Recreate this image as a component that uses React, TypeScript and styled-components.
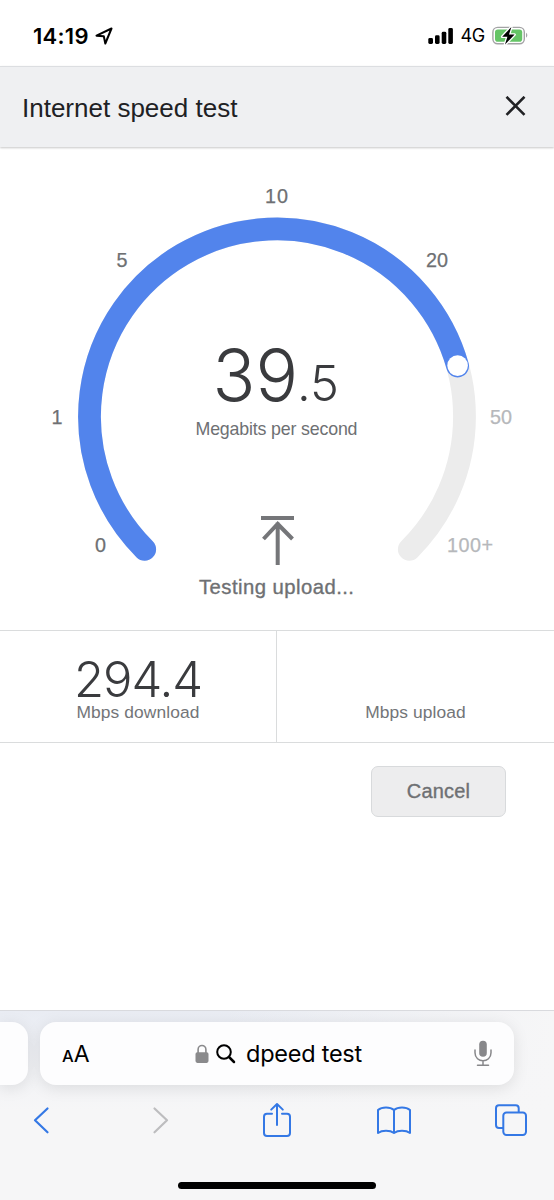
import React from "react";
import styled, { createGlobalStyle } from "styled-components";

const GlobalStyle = createGlobalStyle`
  *, *::before, *::after { box-sizing: border-box; }
  body { margin: 0; background: #fff; }
`;

const helvetica = `"Liberation Sans", Arial, sans-serif`;
const system = `Inter, "Liberation Sans", sans-serif`;

const Screen = styled.div`
  width: 554px;
  height: 1200px;
  display: flex;
  flex-direction: column;
  overflow: hidden;
  background: #fff;
  font-family: ${helvetica};
`;

const StatusBar = styled.div`
  height: 66px;
  flex: none;
  display: flex;
  align-items: center;
  justify-content: space-between;
  padding: 5px 26px 0 33px;
  color: #000;
  font-family: ${system};
`;

const StatusGroup = styled.div<{ $gap: number }>`
  display: flex;
  align-items: center;
  gap: ${(p) => p.$gap}px;
`;

const Clock = styled.span`
  font-size: 22px;
  font-weight: 600;
  line-height: 26px;
  letter-spacing: 0.3px;
`;

const Network = styled.span`
  font-size: 18px;
  line-height: 24px;
  letter-spacing: -0.3px;
`;

const Header = styled.header`
  height: 81px;
  flex: none;
  display: flex;
  align-items: center;
  justify-content: space-between;
  padding: 0 28px 0 22px;
  background: #eff0f2;
  border-top: 1px solid #dcdee1;
  box-shadow: 0 1px 2px rgba(0, 0, 0, 0.22);
`;

const Title = styled.h1`
  margin: 1px 0 0;
  font-size: 26px;
  font-weight: 400;
  line-height: 30px;
  color: #202124;
`;

const IconButton = styled.button`
  display: flex;
  padding: 0;
  border: 0;
  background: none;
`;

const GaugePanel = styled.section`
  height: 483px;
  flex: none;
  padding-top: 1px;

  svg { display: block; }
`;

const GaugeText = styled.text<{ $size: number; $color?: string; $bold?: number }>`
  font-family: ${helvetica};
  font-size: ${(p) => p.$size}px;
  fill: ${(p) => p.$color ?? "#6e7073"};
  stroke: ${(p) => p.$color ?? "#6e7073"};
  stroke-width: ${(p) => p.$bold ?? 0}px;
`;

const GaugeValue = styled.text<{ $size: number }>`
  font-family: ${system};
  font-size: ${(p) => p.$size}px;
  font-weight: 300;
  fill: #3a3b3e;
`;

const Stats = styled.section`
  height: 113px;
  flex: none;
  display: grid;
  grid-template-columns: 276px 278px;
  border-top: 1px solid #dadcdd;
  border-bottom: 1px solid #dadcdd;
`;

const Stat = styled.div`
  display: flex;
  flex-direction: column;
  align-items: center;
  padding-top: 24px;

  & + & { border-left: 1px solid #dadcdd; }
`;

const StatValue = styled.div`
  height: 47px;
  font-family: ${system};
  font-size: 49px;
  font-weight: 300;
  line-height: 49px;
  letter-spacing: -1.1px;
  color: #3a3b3e;
`;

const StatLabel = styled.div`
  font-size: 17.4px;
  line-height: 20px;
  letter-spacing: 0.1px;
  color: #737578;
`;

const Actions = styled.div`
  flex: 1;
  display: flex;
  align-items: flex-start;
  justify-content: flex-end;
  padding: 23px 48px 0 0;
`;

const CancelButton = styled.button`
  width: 135px;
  height: 51px;
  padding: 0;
  border: 1px solid #d8dadc;
  border-radius: 7px;
  background: #ededee;
  color: #6e7073;
  font-family: ${helvetica};
  font-size: 20px;
  letter-spacing: 0.2px;
  -webkit-text-stroke: 0.35px #6e7073;
`;

const Browser = styled.footer`
  height: 190px;
  flex: none;
  display: flex;
  flex-direction: column;
  border-top: 1px solid #d9dade;
  background: linear-gradient(90deg, rgba(246, 246, 247, 0) 40%, #f6f6f7 100%),
    linear-gradient(180deg, #e9ecf3 0, #f2f3f6 60px, #f6f6f7 100px);
`;

const AddressRow = styled.div`
  display: flex;
  gap: 12px;
  padding-top: 11px;
`;

const PreviousTab = styled.div`
  width: 28px;
  height: 63px;
  border-radius: 0 16px 16px 0;
  background: #fdfdfe;
  box-shadow: 0 3px 16px rgba(0, 0, 0, 0.1);
`;

const AddressBar = styled.div`
  width: 474px;
  height: 63px;
  display: grid;
  grid-template-columns: 100px 1fr 100px;
  align-items: center;
  padding: 0 22px;
  border-radius: 16px;
  background: #fdfdfe;
  box-shadow: 0 3px 16px rgba(0, 0, 0, 0.1);
  font-family: ${system};
  color: #000;
`;

const TextSize = styled.div`
  display: flex;
  align-items: baseline;
  margin-top: 3px;
  font-size: 23px;
  line-height: 30px;

  small {
    font-size: 16.5px;
    font-weight: 500;
  }
`;

const Query = styled.div`
  display: flex;
  align-items: center;
  margin-left: 33px;
  white-space: nowrap;
`;

const QueryText = styled.span`
  margin: 1px 0 0 10px;
  font-size: 23.5px;
  line-height: 30px;
  letter-spacing: -0.25px;
`;

const MicSlot = styled.div`
  display: flex;
  justify-content: flex-end;
`;

const Toolbar = styled.nav`
  display: flex;
  align-items: center;
  justify-content: space-between;
  height: 70px;
  padding: 0 13px 0 11px;
`;

const ToolButton = styled.button<{ $nudge?: number }>`
  width: 60px;
  height: 44px;
  display: flex;
  align-items: center;
  justify-content: center;
  padding: 0 0 0 ${(p) => p.$nudge ?? 0}px;
  border: 0;
  background: none;
`;

const HomeIndicator = styled.div`
  width: 198px;
  height: 7px;
  margin: 27px 0 0 178px;
  border-radius: 4px;
  background: #000;
`;

const blue = "#3478e5";

const ticks = [
  { label: "0", x: 95, y: 404, w: 11 },
  { label: "1", x: 51.5, y: 276, w: 11 },
  { label: "5", x: 116.5, y: 119, w: 11 },
  { label: "10", x: 265, y: 55, w: 23 },
  { label: "20", x: 426, y: 119, w: 22 },
  { label: "50", x: 490, y: 276, w: 22, dim: true },
  { label: "100+", x: 447, y: 404, w: 46, dim: true },
];

function Gauge() {
  return (
    <svg width="554" height="482" viewBox="0 0 554 482">
      <path d="M144.7 401.3A187.5 187.5 0 1 1 409.3 401.3" fill="none" stroke="#ececec" strokeWidth="22.8" strokeLinecap="round" />
      <path d="M144.7 401.3A187.5 187.5 0 1 1 457.6 218" fill="none" stroke="#5284ec" strokeWidth="22.8" strokeLinecap="round" />
      <circle cx="457.6" cy="217.6" r="10.3" fill="#fff" />
      {ticks.map((t) => (
        <GaugeText key={t.label} x={t.x} y={t.y} textLength={t.w} $size={19.8} $bold={0.25} $color={t.dim ? "#b6b8bb" : "#6e7073"}>
          {t.label}
        </GaugeText>
      ))}
      <GaugeValue x="212.5" y="253" $size={72} textLength="85.5" lengthAdjust="spacingAndGlyphs">39</GaugeValue>
      <GaugeValue x="297" y="253" $size={49} textLength="42" lengthAdjust="spacingAndGlyphs">.5</GaugeValue>
      <GaugeText x="195.5" y="287" textLength="162" $size={17.8}>Megabits per second</GaugeText>
      <path d="M261 370H294M277.7 417V374.5M263.5 391L277.7 376L292.5 391" fill="none" stroke="#757679" strokeWidth="4" />
      <GaugeText x="199" y="446" textLength="155" $size={20.3} $bold={0.35}>Testing upload...</GaugeText>
    </svg>
  );
}

function LocationIcon() {
  return (
    <svg width="18" height="18" viewBox="0 0 18 18">
      <path d="M1.5 8.7L16.5 1.5L10.3 16.5L8.8 9.3Z" fill="none" stroke="#000" strokeWidth="2" strokeLinejoin="round" />
    </svg>
  );
}

function SignalIcon() {
  return (
    <svg width="26" height="18" viewBox="0 0 26 18">
      <rect x="0.3" y="11" width="4.7" height="6" rx="1.4" />
      <rect x="7" y="8.3" width="4.6" height="8.7" rx="1.4" />
      <rect x="13.7" y="4.8" width="4.6" height="12.2" rx="1.4" />
      <rect x="20.3" y="1" width="4.6" height="16" rx="1.4" />
    </svg>
  );
}

function BatteryIcon() {
  return (
    <svg width="36" height="20" viewBox="0 0 36 20">
      <rect x="0.9" y="1.4" width="31.4" height="16.4" rx="4.8" fill="#fff" stroke="#a3a3a5" strokeWidth="1.4" />
      <rect x="3" y="3.5" width="27.2" height="12.2" rx="2.8" fill="#65c466" />
      <path d="M34 6.8C35.8 7.9 35.8 10.5 34 11.7Z" fill="#a3a3a5" />
      <path d="M19.4 0.9L10.2 10.7H15.4L13 18.5L22.6 8.6H17Z" fill="#000" stroke="#fff" strokeWidth="2.6" strokeLinejoin="round" paintOrder="stroke" />
    </svg>
  );
}

export default function App() {
  return (
    <>
      <GlobalStyle />
      <Screen>
        <StatusBar>
          <StatusGroup $gap={6}>
            <Clock>14:19</Clock>
            <LocationIcon />
          </StatusGroup>
          <StatusGroup $gap={7}>
            <SignalIcon />
            <Network>4G</Network>
            <BatteryIcon />
          </StatusGroup>
        </StatusBar>

        <Header>
          <Title>Internet speed test</Title>
          <IconButton aria-label="Close">
            <svg width="22" height="22" viewBox="0 0 22 22">
              <path d="M2.5 0.8L20.5 18.8M20.5 0.8L2.5 18.8" stroke="#202124" strokeWidth="2.6" />
            </svg>
          </IconButton>
        </Header>

        <GaugePanel>
          <Gauge />
        </GaugePanel>

        <Stats>
          <Stat>
            <StatValue>294.4</StatValue>
            <StatLabel>Mbps download</StatLabel>
          </Stat>
          <Stat>
            <StatValue />
            <StatLabel>Mbps upload</StatLabel>
          </Stat>
        </Stats>

        <Actions>
          <CancelButton>Cancel</CancelButton>
        </Actions>

        <Browser>
          <AddressRow>
            <PreviousTab />
            <AddressBar>
              <TextSize>
                <small>A</small>A
              </TextSize>
              <Query>
                <svg width="14" height="20" viewBox="0 0 14 20">
                  <path d="M3.1 9V5.6C3.1 0.1 10.9 0.1 10.9 5.6V9" fill="none" stroke="#8a8a8c" strokeWidth="1.6" />
                  <rect x="0.5" y="8.3" width="13" height="10.6" rx="1.8" fill="#8a8a8c" />
                </svg>
                <svg width="27" height="20" viewBox="-7 0 27 20">
                  <circle cx="8" cy="8" r="6.8" fill="none" stroke="#000" strokeWidth="2" />
                  <path d="M13 13L18 18" stroke="#000" strokeWidth="2.5" strokeLinecap="round" />
                </svg>
                <QueryText>dpeed test</QueryText>
              </Query>
              <MicSlot>
                <svg width="18" height="27" viewBox="0 0 18 27">
                  <rect x="5.2" y="0.8" width="7.6" height="16" rx="3.8" fill="#87878a" />
                  <path d="M1 10V12.8C1 23.4 17 23.4 17 12.8V10M9 20.8V25.2M3.5 25.2H14.5" fill="none" stroke="#87878a" strokeWidth="1.5" strokeLinecap="round" />
                </svg>
              </MicSlot>
            </AddressBar>
          </AddressRow>

          <Toolbar>
            <ToolButton aria-label="Back">
              <svg width="18" height="28" viewBox="0 0 18 28">
                <path d="M15.5 2.5L3 14.3L15.5 26.3" fill="none" stroke={blue} strokeWidth="2.2" strokeLinecap="round" strokeLinejoin="round" />
              </svg>
            </ToolButton>
            <ToolButton aria-label="Forward" $nudge={5}>
              <svg width="18" height="28" viewBox="0 0 18 28">
                <path d="M2.5 2.5L15 14.3L2.5 26.3" fill="none" stroke="#bdbdbf" strokeWidth="2.2" strokeLinecap="round" strokeLinejoin="round" />
              </svg>
            </ToolButton>
            <ToolButton aria-label="Share" $nudge={2}>
              <svg width="30" height="36" viewBox="0 0 30 36">
                <path d="M10 11.8H5Q2 11.8 2 14.8V31Q2 34 5 34H25Q28 34 28 31V14.8Q28 11.8 25 11.8H20M15 23V2M9.2 7.6L15 2L20.8 7.6" fill="none" stroke={blue} strokeWidth="2" strokeLinecap="round" strokeLinejoin="round" />
              </svg>
            </ToolButton>
            <ToolButton aria-label="Bookmarks">
              <svg width="36" height="30" viewBox="0 0 36 30">
                <path d="M18 5C14 1.5 6 1.5 2 5V28C6 25 14 25 18 28C22 25 30 25 34 28V5C30 1.5 22 1.5 18 5ZV28" fill="none" stroke={blue} strokeWidth="2" strokeLinejoin="round" />
              </svg>
            </ToolButton>
            <ToolButton aria-label="Tabs">
              <svg width="34" height="34" viewBox="0 0 34 34">
                <path d="M9 25H5Q2 25 2 22V5.3Q2 2.3 5 2.3H21.7Q24.7 2.3 24.7 5.3V9" fill="none" stroke={blue} strokeWidth="2" />
                <rect x="9.3" y="9.6" width="22.7" height="22.3" rx="3.2" fill="none" stroke={blue} strokeWidth="2" />
              </svg>
            </ToolButton>
          </Toolbar>
          <HomeIndicator />
        </Browser>
      </Screen>
    </>
  );
}
